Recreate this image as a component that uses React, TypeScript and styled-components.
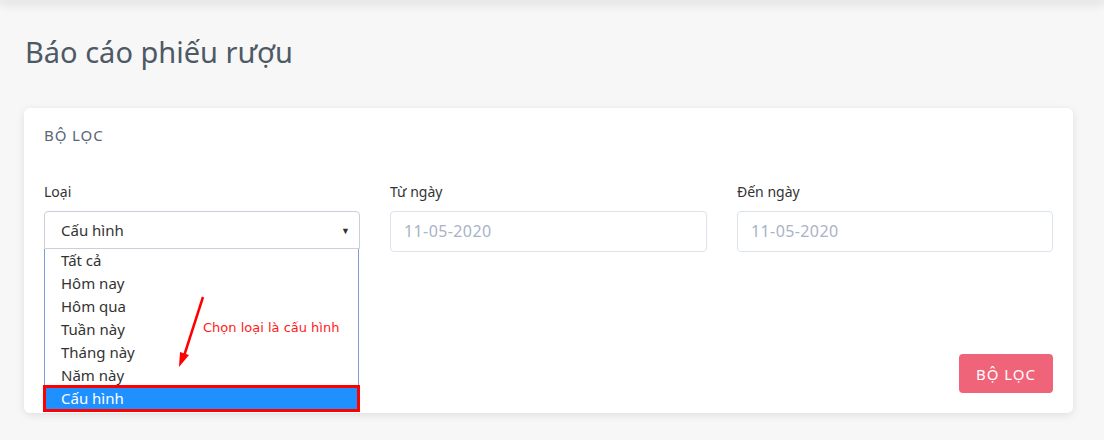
import React from "react";
import styled, { createGlobalStyle } from "styled-components";

const GlobalStyle = createGlobalStyle`
  html, body { margin: 0; padding: 0; }
  body {
    background: #f7f7f7;
    font-family: "Noto Sans", "Open Sans", sans-serif;
    color: #333;
    width: 1104px;
    height: 440px;
    overflow: hidden;
  }
  * { box-sizing: border-box; }
`;

const TopShadow = styled.div`
  height: 0;
  box-shadow: 0 0 12px 2px rgba(0, 0, 0, 0.22);
`;

const Page = styled.main`
  padding: 30px 31px 0 24px;
`;

const Title = styled.h1`
  margin: 0 0 34px 1px;
  font-size: 29px;
  font-weight: 400;
  color: #4e5966;
  line-height: 44px;
`;

const Card = styled.section`
  position: relative;
  background: #fff;
  border-radius: 6px;
  box-shadow: 0 2px 8px rgba(0, 0, 0, 0.1);
  height: 305px;
  padding: 0 20px;
`;

const CardHeader = styled.h2`
  margin: 0;
  padding: 17px 0 0;
  height: 74px;
  font-size: 15px;
  font-weight: 400;
  color: #5a6575;
  letter-spacing: 0.9px;
`;

const FormGrid = styled.div`
  display: grid;
  grid-template-columns: 316px 317px 316px;
  column-gap: 30px;
`;

const Field = styled.div`
  position: relative;
  display: flex;
  flex-direction: column;
`;

const Label = styled.label`
  font-size: 14px;
  color: #333;
  line-height: 20px;
  margin-bottom: 9px;
`;

const SelectBox = styled.div`
  height: 38px;
  border: 1px solid #c9d0da;
  border-radius: 4px 4px 0 0;
  display: flex;
  align-items: center;
  justify-content: space-between;
  padding: 0 9px 0 16px;
  font-size: 15px;
  color: #333;
`;

const Caret = styled.span`
  font-size: 9px;
  color: #333;
`;

const Input = styled.div`
  height: 41px;
  border: 1px solid #dde3eb;
  border-radius: 4px;
  display: flex;
  align-items: center;
  padding: 0 13px 1px;
  font-size: 16px;
  letter-spacing: 0.4px;
  color: #a8b3c7;
`;

const Dropdown = styled.ul`
  position: absolute;
  top: 67px;
  left: 0;
  width: 315px;
  margin: 0;
  padding: 0;
  list-style: none;
  background: #fff;
  border: 1px solid #7f9ccf;
  border-top: none;
  z-index: 2;
`;

const Option = styled.li<{ $selected?: boolean }>`
  height: 23px;
  line-height: 23px;
  padding-left: 16px;
  font-size: 15px;
  color: ${(p) => (p.$selected ? "#fff" : "#333")};
  background: ${(p) => (p.$selected ? "#1e90ff" : "transparent")};
  outline: ${(p) => (p.$selected ? "3px solid #ff0000" : "none")};
  outline-offset: -1px;
`;

const Footer = styled.div`
  display: flex;
  justify-content: flex-end;
  margin-top: 102px;
`;

const FilterButton = styled.button`
  width: 94px;
  height: 39px;
  border: none;
  border-radius: 4px;
  background: #f0647a;
  color: #fff;
  font-family: inherit;
  font-size: 15px;
  letter-spacing: 1px;
`;

const Annotation = styled.div`
  position: absolute;
  left: 150px;
  top: 184px;
  width: 220px;
  height: 80px;
  z-index: 3;
  pointer-events: none;
`;

const AnnotationText = styled.span`
  position: absolute;
  left: 29px;
  top: 28px;
  font-family: "DejaVu Sans", sans-serif;
  font-size: 13px;
  color: #ff1a1a;
  white-space: nowrap;
`;

const options = ["Tất cả", "Hôm nay", "Hôm qua", "Tuần này", "Tháng này", "Năm này", "Cấu hình"];

export default function App() {
  return (
    <>
      <GlobalStyle />
      <TopShadow />
      <Page>
        <Title>Báo cáo phiếu rượu</Title>
        <Card>
          <CardHeader>BỘ LỌC</CardHeader>
          <FormGrid>
            <Field>
              <Label>Loại</Label>
              <SelectBox>
                <span>Cấu hình</span>
                <Caret>▼</Caret>
              </SelectBox>
              <Dropdown>
                {options.map((o) => (
                  <Option key={o} $selected={o === "Cấu hình"}>
                    {o}
                  </Option>
                ))}
              </Dropdown>
            </Field>
            <Field>
              <Label>Từ ngày</Label>
              <Input>11-05-2020</Input>
            </Field>
            <Field>
              <Label>Đến ngày</Label>
              <Input>11-05-2020</Input>
            </Field>
          </FormGrid>
          <Footer>
            <FilterButton>BỘ LỌC</FilterButton>
          </Footer>
          <Annotation>
            <svg width="60" height="80" viewBox="0 0 60 80">
              <line x1="29" y1="5" x2="10" y2="64" stroke="#ff0000" strokeWidth="2.5" />
              <polygon points="5,75 6,60 15,63" fill="#ff0000" />
            </svg>
            <AnnotationText>Chọn loại là cấu hình</AnnotationText>
          </Annotation>
        </Card>
      </Page>
    </>
  );
}
